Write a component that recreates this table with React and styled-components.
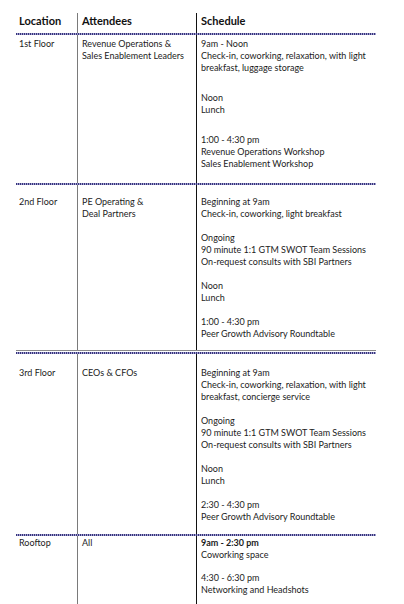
import React from "react";
import styled, { createGlobalStyle } from "styled-components";

const GlobalStyle = createGlobalStyle`
  html, body {
    margin: 0;
    padding: 0;
    background: #fff;
    overflow: hidden;
  }
  body {
    font-family: "Lato", "Open Sans", sans-serif;
    color: #1c1c1c;
  }
`;

const rows = [
  {
    location: "1st Floor",
    attendees: ["Revenue Operations &", "Sales Enablement Leaders"],
    pad: [3, 13],
    gap: 18,
    schedule: [
      ["9am - Noon", "Check-in, coworking, relaxation, with light", "breakfast, luggage storage"],
      ["Noon", "Lunch"],
      ["1:00 - 4:30 pm", "Revenue Operations Workshop", "Sales Enablement Workshop"],
    ],
  },
  {
    location: "2nd Floor",
    attendees: ["PE Operating &", "Deal Partners"],
    pad: [11, 10],
    gap: 12,
    double: true,
    schedule: [
      ["Beginning at 9am", "Check-in, coworking, light breakfast"],
      ["Ongoing", "90 minute 1:1 GTM SWOT Team Sessions", "On-request consults with SBI Partners"],
      ["Noon", "Lunch"],
      ["1:00 - 4:30 pm", "Peer Growth Advisory Roundtable"],
    ],
  },
  {
    location: "3rd Floor",
    attendees: ["CEOs & CFOs"],
    pad: [13, 11],
    gap: 12,
    schedule: [
      ["Beginning at 9am", "Check-in, coworking, relaxation, with light", "breakfast, concierge service"],
      ["Ongoing", "90 minute 1:1 GTM SWOT Team Sessions", "On-request consults with SBI Partners"],
      ["Noon", "Lunch"],
      ["2:30 - 4:30 pm", "Peer Growth Advisory Roundtable"],
    ],
  },
  {
    location: "Rooftop",
    attendees: ["All"],
    pad: [1, 40],
    gap: 11,
    boldFirst: true,
    last: true,
    schedule: [
      ["9am - 2:30 pm", "Coworking space"],
      ["4:30 - 6:30 pm", "Networking and Headshots"],
    ],
  },
];

const App = () => {
  return (
    <Page>
      <GlobalStyle />
      <Table>
        <Row>
          <HeadCell>Location</HeadCell>
          <HeadCell $line="gray">Attendees</HeadCell>
          <HeadCell $line="black">Schedule</HeadCell>
        </Row>
        <Divider />
        {rows.map((row) => (
          <React.Fragment key={row.location}>
            <Row>
              <Cell $pad={row.pad}>
                <Line>{row.location}</Line>
              </Cell>
              <Cell $pad={row.pad} $line="gray">
                {row.attendees.map((a) => (
                  <Line key={a}>{a}</Line>
                ))}
              </Cell>
              <Cell $pad={row.pad} $line="black">
                <Blocks $gap={row.gap}>
                  {row.schedule.map((block, bi) => (
                    <div key={bi}>
                      {block.map((l, li) => (
                        <Line key={li} $bold={row.boldFirst && bi === 0 && li === 0}>
                          {l}
                        </Line>
                      ))}
                    </div>
                  ))}
                </Blocks>
              </Cell>
            </Row>
            {!row.last && <Divider $double={row.double} />}
          </React.Fragment>
        ))}
      </Table>
    </Page>
  );
};

export default App;

//styles
const Page = styled.div`
  width: 404px;
  height: 604px;
  overflow: hidden;
  padding: 13px 0 0 16px;
  box-sizing: border-box;
`;

const Table = styled.div`
  width: 360px;
  display: flex;
  flex-direction: column;
`;

const Row = styled.div`
  display: grid;
  grid-template-columns: 61px 119px 180px;
`;

const lineColor = (l) =>
  l === "gray" ? "1.5px solid #7a7a7a" : l === "black" ? "1.5px solid #111" : "none";

const HeadCell = styled.div`
  border-left: ${(p) => lineColor(p.$line)};
  padding: 1px 0 5px ${(p) => (p.$line ? "4px" : "3px")};
  font-size: 11px;
  line-height: 14px;
  font-weight: 700;
  color: #111;
`;

const Cell = styled.div`
  border-left: ${(p) => lineColor(p.$line)};
  padding: ${(p) => p.$pad[0]}px 0 ${(p) => p.$pad[1]}px
    ${(p) => (p.$line ? "4px" : "3px")};
`;

const Blocks = styled.div`
  display: flex;
  flex-direction: column;
  gap: ${(p) => p.$gap}px;
`;

const Line = styled.div`
  font-size: 9px;
  line-height: 12px;
  white-space: nowrap;
  font-weight: ${(p) => (p.$bold ? 700 : 400)};
`;

const Divider = styled.div`
  height: 2px;
  width: 360px;
  background-image: linear-gradient(90deg, #36347a 0 1px, #a19fcf 1px 2px);
  background-size: 2px 2px;
  ${(p) =>
    p.$double &&
    `
    border-top: 1.5px solid #8a8a8a;
    padding-top: 1px;
    background-clip: content-box;
  `}
`;
